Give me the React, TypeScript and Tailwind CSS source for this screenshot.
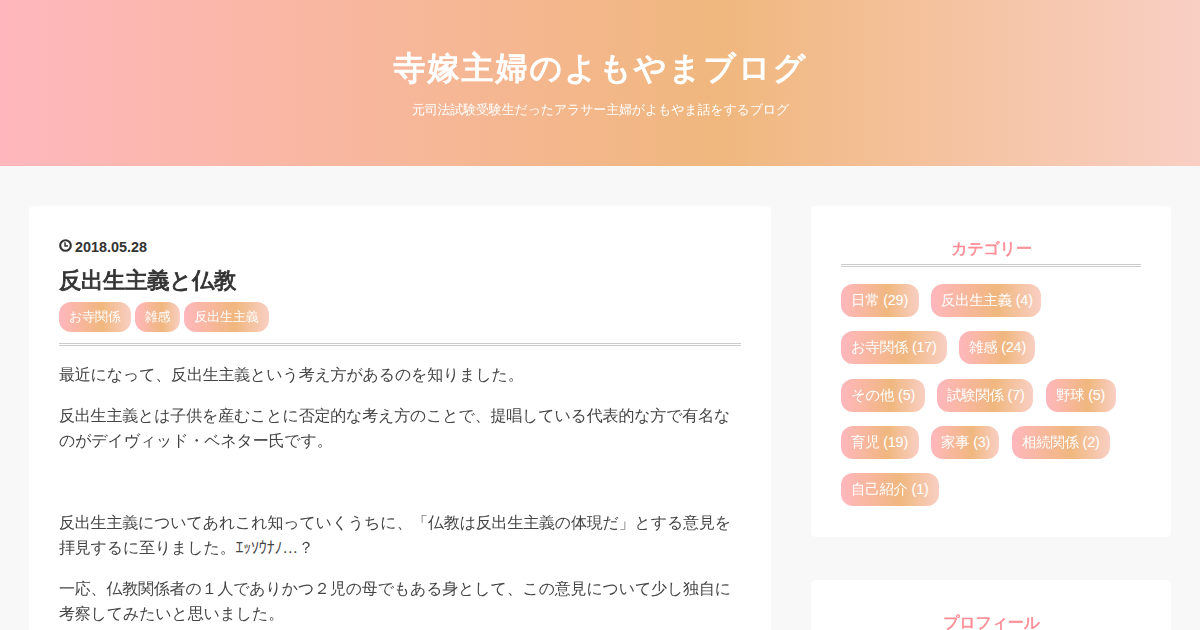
const postTags = ["お寺関係", "雑感", "反出生主義"];

const categories = [
  { label: "日常 (29)", size: "mr-[12px] w-[78px]" },
  { label: "反出生主義 (4)", size: "mr-[12px] w-[110px]" },
  { label: "お寺関係 (17)", size: "mr-[12px] w-[106px]" },
  { label: "雑感 (24)", size: "mr-[31px] w-[76px]" },
  { label: "その他 (5)", size: "mr-[12px] w-[84px]" },
  { label: "試験関係 (7)", size: "mr-[13px] w-[96px]" },
  { label: "野球 (5)", size: "mr-[12px] w-[70px]" },
  { label: "育児 (19)", size: "mr-[12px] w-[78px]" },
  { label: "家事 (3)", size: "mr-[13px] w-[68px]" },
  { label: "相続関係 (2)", size: "mr-[12px] w-[98px]" },
  { label: "自己紹介 (1)", size: "mr-[12px] w-[98px]" },
];

function ClockIcon() {
  return (
    <svg viewBox="0 0 14 14" className="-mt-[5px] h-[13px] w-[13px] shrink-0" fill="none" stroke="currentColor" strokeWidth="2.3">
      <circle cx="7" cy="7" r="5.7" />
      <path d="M6.5 3.6v4h3.2" strokeWidth="1.6" />
    </svg>
  );
}

function Header() {
  return (
    <header className="h-[166px] bg-[linear-gradient(90deg,#ffb7bd_0%,#f0b77e_60%,#f9cfc4_100%)] pt-[44px] text-center text-white">
      <h1 className="pl-[1px] text-[32px] leading-[48px] font-bold tracking-[2px] [-webkit-text-stroke:1.2px]">
        寺嫁主婦のよもやまブログ
      </h1>
      <p className="mt-[8px] pl-[1px] text-[13px] leading-[20px] tracking-[-0.17px]">元司法試験受験生だったアラサー主婦がよもやま話をするブログ</p>
    </header>
  );
}

function Article() {
  return (
    <article className="h-[700px] w-[742px] rounded-[5px] bg-white px-[30px] pt-[30px]">
      <div className="flex h-[23px] items-center gap-[3px] text-[14.4px] font-bold text-[#333]">
        <ClockIcon />
        <time>2018.05.28</time>
      </div>
      <h2 className="mt-[5px] text-[22.4px] leading-[34px] font-bold tracking-[-0.33px] text-[#333] [-webkit-text-stroke:0.9px]">
        反出生主義と仏教
      </h2>
      <div className="mt-[4px] flex gap-[4px]">
        {postTags.map((tag) => (
          <a
            key={tag}
            href="#"
            className="h-[30px] rounded-[12px] bg-[linear-gradient(90deg,#ffb7bd_0%,#f0b77e_60%,#f9cfc4_100%)] px-[10px] text-[13px] leading-[30px] tracking-[-0.15px] text-white"
          >
            {tag}
          </a>
        ))}
      </div>
      <div className="mt-[11px] h-[3px] border-y border-[#ccc]" />
      <div className="pt-[16px] text-[16px] leading-[25px] tracking-[-0.2px] text-[#444]">
        <p className="mb-[16px]">最近になって、反出生主義という考え方があるのを知りました。</p>
        <p className="mb-[16px]">
          反出生主義とは子供を産むことに否定的な考え方のことで、提唱している代表的な方で有名なのがデイヴィッド・ベネター氏です。
        </p>
        <p className="mb-[16px]">&nbsp;</p>
        <p className="mb-[16px]">
          反出生主義についてあれこれ知っていくうちに、「仏教は反出生主義の体現だ」とする意見を拝見するに至りました。ｴｯｿｳﾅﾉ…？
        </p>
        <p className="mb-[16px]">
          一応、仏教関係者の１人でありかつ２児の母でもある身として、この意見について少し独自に考察してみたいと思いました。
        </p>
      </div>
    </article>
  );
}

function SideTitle({ children }: { children: string }) {
  return (
    <>
      <h3 className="h-[28px] pl-[1px] text-center text-[16px] leading-[25px] font-bold tracking-[-0.2px] text-[#ff8e97] [-webkit-text-stroke:0.6px]">
        {children}
      </h3>
      <div className="h-[3px] border-y border-[#ccc]" />
    </>
  );
}

function Sidebar() {
  return (
    <aside className="w-[360px]">
      <section className="h-[331px] rounded-[5px] bg-white px-[30px] pt-[30px]">
        <SideTitle>カテゴリー</SideTitle>
        <div className="mt-[17px] flex flex-wrap gap-y-[14.3px]">
          {categories.map(({ label, size }) => (
            <a
              key={label}
              href="#"
              className={`${size} h-[33px] rounded-[12px] bg-[linear-gradient(90deg,#ffb7bd_0%,#f0b77e_60%,#f9cfc4_100%)] pl-[10px] text-[14.4px] leading-[33px] tracking-[-0.2px] whitespace-nowrap text-white`}
            >
              {label}
            </a>
          ))}
        </div>
      </section>
      <section className="mt-[43px] h-[300px] rounded-[5px] bg-white px-[30px] pt-[30px]">
        <SideTitle>プロフィール</SideTitle>
      </section>
    </aside>
  );
}

export default function App() {
  return (
    <div className="h-[630px] overflow-hidden bg-[#f8f8f8] font-['Liberation_Sans','WenQuanYi_Zen_Hei','Noto_Sans_CJK_JP',sans-serif] [text-spacing-trim:space-all]" lang="ja">
      <Header />
      <main className="flex gap-[40px] px-[29px] pt-[40px]">
        <Article />
        <Sidebar />
      </main>
    </div>
  );
}
